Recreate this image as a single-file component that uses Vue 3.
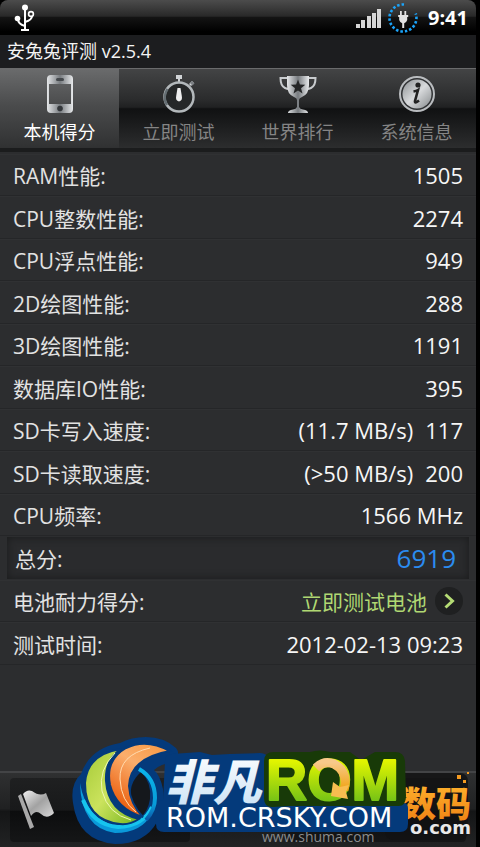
<template>
  <div class="screen">
    <!-- STATUS BAR -->
    <header class="status-bar">
      <svg class="usb" viewBox="0 0 22 28" aria-hidden="true">
        <g fill="none" stroke="#fff" stroke-width="2">
          <path d="M11 4V26M7 26h8M4 15q0 5 7 7M11 18q7-2 7-6" />
          <circle cx="17" cy="10" r="2.4" stroke-width="1.6" />
        </g>
        <circle cx="11" cy="3.5" r="3" fill="#fff" />
        <circle cx="3.5" cy="14.5" r="2.8" fill="#fff" />
      </svg>
      <div class="status-right">
        <svg class="signal" viewBox="0 0 26 20" aria-hidden="true">
          <path
            fill="#d6d6d6"
            d="M0 16h4v4H0zM5 12h4v8H5zM11 8h4v12h-4zM16 5h4v15h-4zM21 1h4v19h-4z"
          />
        </svg>
        <svg class="charge" viewBox="0 0 30 30" aria-hidden="true">
          <path
            d="M16 1.500A13.500 13.500 0 1 0 27.700 10.500"
            fill="none"
            stroke="#1ba4fa"
            stroke-width="2.600"
            stroke-dasharray="2.500 2"
          />
          <path
            fill="#e2e2e2"
            d="M12 8h1.800v4h2.600V8h1.800v4h2v2h-1v3q-1 3-3 3.200V25h-2v-4.800q-2-.2-3-3.200v-3h-1v-2h1.800z"
          />
        </svg>
        <span class="clock">9:41</span>
      </div>
    </header>

    <h1 class="app-title">安兔兔评测 v2.5.4</h1>

    <!-- TABS -->
    <nav class="tabs">
      <button
        v-for="tab in tabs"
        :key="tab.id"
        type="button"
        class="tab"
        :class="{ active: tab.id === activeTab }"
        @click="activeTab = tab.id"
      >
        <svg class="tab-icon" viewBox="0 0 40 40" aria-hidden="true">
          <defs>
            <linearGradient :id="'metal-' + tab.id" x1="0" y1="0" x2="1" y2="0">
              <stop offset="0" stop-color="#e4e6e8" />
              <stop offset="0.500" stop-color="#777b7f" />
              <stop offset="1" stop-color="#e8eaec" />
            </linearGradient>
            <linearGradient id="disc" x1="0" y1="0" x2="1" y2="1">
              <stop offset="0" stop-color="#8b8f92" />
              <stop offset="0.500" stop-color="#d8dadc" />
              <stop offset="1" stop-color="#85898c" />
            </linearGradient>
          </defs>
          <template v-if="tab.id === 'score'">
            <path
              :fill="'url(#metal-' + tab.id + ')'"
              fill-rule="evenodd"
              d="M11 1h18q4 0 4 4v30q0 4-4 4H11q-4 0-4-4V5q0-4 4-4zM9 10v20h22V10z"
            />
            <rect x="16" y="4" width="8" height="3" rx="1.500" fill="#44484c" />
            <circle cx="20" cy="34.500" r="2.800" fill="#33363a" />
          </template>
          <template v-else-if="tab.id === 'test'">
            <path d="M17 1h6v4h-2v3h-2V5h-2zM30 10l3-3 2 2-3 3z" fill="#d0d3d6" />
            <path d="M32 8l2.500 2.500" stroke="#7c8084" stroke-width="3" />
            <circle cx="20" cy="23" r="14.500" fill="#252728" stroke="#b3b8bb" stroke-width="2.500" />
            <path d="M8.500 15A14.500 14.500 0 0 0 8 31" fill="none" stroke="#646d72" stroke-width="2.500" />
            <path d="M18.500 14h3l1.300 8q1 4.500-2.800 5.500-3.800-1-2.800-5.500z" fill="#eee" />
          </template>
          <template v-else-if="tab.id === 'rank'">
            <path
              d="M10 4H2.500q0 8 4.500 10 2 1 4 1M30 4h7.500q0 8-4.500 10-2 1-4 1"
              fill="none"
              stroke="#c8cbce"
              stroke-width="2"
            />
            <path
              :fill="'url(#metal-' + tab.id + ')'"
              d="M9 2h22v9q0 9-7 12-3 1-3 3v7q1 2 4 2.500 5 .5 5 3.500H10q0-3 5-3.500 3-.5 4-2.500v-7q0-2-3-3-7-3-7-12z"
            />
            <path
              fill="#252627"
              d="M20 5.500l1.900 5.100 5.400.2-4.300 3.400 1.500 5.200-4.500-3-4.500 3 1.500-5.200-4.300-3.400 5.400-.2z"
            />
          </template>
          <template v-else>
            <circle cx="20" cy="20" r="17" fill="#303234" stroke="#b9bcbf" stroke-width="2" />
            <circle cx="20" cy="20" r="14.500" fill="url(#disc)" />
            <circle cx="21" cy="11" r="2.600" fill="#222" />
            <path
              d="M16.500 17.500q3-.5 4.500-1.500l-3 11q-.5 3 4-.5"
              fill="none"
              stroke="#222"
              stroke-width="2.600"
            />
          </template>
        </svg>
        <span>{{ tab.label }}</span>
      </button>
    </nav>

    <!-- RESULTS -->
    <main class="results">
      <dl class="rows">
        <div v-for="row in rows" :key="row.label" class="row">
          <dt>{{ row.label }}:</dt>
          <dd>
            <span v-if="row.speed">({{ row.speed }})</span>
            <span>{{ row.value }}</span>
          </dd>
        </div>
      </dl>
      <dl class="total">
        <dt>总分:</dt>
        <dd>6919</dd>
      </dl>
      <dl class="rows">
        <div class="row">
          <dt>电池耐力得分:</dt>
          <dd>
            <button type="button" class="battery">
              立即测试电池
              <svg viewBox="0 0 28 28" aria-hidden="true">
                <circle cx="14" cy="14" r="14" fill="#1f2021" />
                <path d="M10.500 7.500l7 6.500-7 6.500" fill="none" stroke="#b5dc75" stroke-width="3" />
              </svg>
            </button>
          </dd>
        </div>
        <div class="row">
          <dt>测试时间:</dt>
          <dd>2012-02-13 09:23</dd>
        </div>
      </dl>
    </main>

    <!-- BOTTOM BAR -->
    <footer class="bottom-bar">
      <button type="button" class="bar-button" aria-label="提交">
        <svg class="flag" viewBox="0 0 38 40" aria-hidden="true">
          <defs>
            <linearGradient id="flag-metal" x1="0" y1="0" x2="1" y2="1">
              <stop offset="0" stop-color="#f2f2f2" />
              <stop offset="0.500" stop-color="#a2a2a2" />
              <stop offset="1" stop-color="#d8d8d8" />
            </linearGradient>
          </defs>
          <path d="M1 6l3-2 13 33-4 2z" fill="#a9a9a9" />
          <path
            d="M6 4q4-5 9-3 8 6 14 2l8 20q-7 7-13 1-5-5-10 2z"
            fill="url(#flag-metal)"
          />
        </svg>
      </button>
      <button type="button" class="bar-button" aria-label="分享"></button>
    </footer>

    <!-- Watermarks lie over the bottom bar -->
    <svg class="watermark" viewBox="0 0 480 117">
      <defs>
        <linearGradient id="wm-lime" x1="0" y1="0" x2="1" y2="1">
          <stop offset="0" stop-color="#a4c936" />
          <stop offset="0.500" stop-color="#cbe35d" />
          <stop offset="1" stop-color="#75b51d" />
        </linearGradient>
        <linearGradient id="wm-orange" x1="1" y1="0" x2="0.400" y2="1">
          <stop offset="0" stop-color="#f7963e" />
          <stop offset="0.450" stop-color="#fbae6c" />
          <stop offset="1" stop-color="#ea5c0c" />
        </linearGradient>
        <linearGradient id="wm-blue" x1="0" y1="0" x2="0" y2="1">
          <stop offset="0" stop-color="#0bb5ea" />
          <stop offset="0.700" stop-color="#079bd9" />
          <stop offset="1" stop-color="#0c55a5" />
        </linearGradient>
        <linearGradient id="wm-white" x1="0" y1="0" x2="0" y2="1">
          <stop offset="0" stop-color="#fff" />
          <stop offset="1" stop-color="#c6e0f5" />
        </linearGradient>
        <linearGradient id="wm-green" x1="0" y1="0" x2="0" y2="1">
          <stop offset="0.200" stop-color="#e2f500" />
          <stop offset="1" stop-color="#58b51c" />
        </linearGradient>
        <linearGradient id="wm-amber" x1="0" y1="0" x2="0" y2="1">
          <stop offset="0" stop-color="#f8c98a" />
          <stop offset="1" stop-color="#f0a312" />
        </linearGradient>
        <linearGradient id="wm-gold" x1="0" y1="0" x2="0" y2="1">
          <stop offset="0" stop-color="#ffb52e" />
          <stop offset="1" stop-color="#ee7d12" />
        </linearGradient>
      </defs>

      <rect x="385" y="43" width="83" height="67" rx="8" fill="#111213" opacity="0.800" />
      <text class="wm-site" x="262" y="112">www.shuma.com</text>
      <text class="wm-digital" x="401" y="87">数码</text>
      <text class="wm-com" x="410" y="104">o.com</text>
      <path d="M457 45h4v4h-4zM463 50h3v3h-3zM467 42h2v2h-2z" fill="#f49a20" />

      <!-- Backing shapes -->
      <path
        fill="#043a7b"
        d="M176 18Q164 7 146 7q-15 0-26 6Q90 18 81 44q-11 10-8 29 5 38 42 41 30 0 42-22 9-15 6-33-3-14-9-19 6-6 20-8 7-8 2-14z"
      />
      <path
        fill="#043a7b"
        d="M172 24q-7 0-7 7l-2 39q-7 1-7 8v16q0 8 8 8h236q8 0 8-8V78q0-5-5-5H265l3-44q-1-6-8-6l-30 1-18 1-12-3z"
      />
      <path
        fill="#183a08"
        d="M274 22h36q10-3 20 0h20l11 8 14-8h20q9 0 10 9l1 35q0 11-9 10H290l-18 1q-8 0-8-9V31q0-9 10-9z"
      />

      <!-- Globe emblem -->
      <path d="M141 42q11 11 9 27-2 12-9 18l-9-14q-5-19 9-31z" fill="#15181c" />
      <path d="M80 53q6 36 38 44 22 1 34-14-10 20-37 20-34-5-35-50z" fill="#0a9ada" />
      <path
        d="M83 70q10 25 35 27 26-1 34-20"
        fill="none"
        stroke="#16c4ee"
        stroke-width="4"
      />
      <path
        d="M139 39q16 9 16 29 0 12-9 22"
        fill="none"
        stroke="url(#wm-blue)"
        stroke-width="4"
      />
      <path
        fill="url(#wm-lime)"
        stroke="#043a7b"
        stroke-width="2"
        d="M121 19q-34 5-36 34 0 37 35 41 10 1 19-5-31-7-33-38-1-22 15-32z"
      />
      <path d="M115 23q-17 17-13 38 6 23 29 29" fill="none" stroke="#eff7b4" stroke-width="1" />
      <path
        fill="url(#wm-orange)"
        stroke="#043a7b"
        stroke-width="2"
        d="M170 21q-24-13-44-3-21 12-16 37 6 24 33 32-13-13-14-31 1-28 41-35z"
      />
      <path d="M150 18q-31 7-30 31 1 22 16 33" fill="none" stroke="#ffdbaf" stroke-width="1" />

      <!-- Brand -->
      <text class="wm-brand" x="165" y="70">非凡</text>
      <text class="wm-rom" x="266" y="70">ROM</text>
      <path
        fill="none"
        stroke="url(#wm-amber)"
        stroke-width="9"
        d="M316 38q8-8 18-4 15 8 10 26"
      />
      <path d="M333 52l-2 14 17 3-2-7 3-7-9 2z" fill="#f8bd50" />
      <text class="wm-url" x="166" y="97">ROM.CRSKY.COM</text>
    </svg>
  </div>
</template>

<script setup>
import { ref } from 'vue';

const activeTab = ref('score');

const tabs = [
  { id: 'score', label: '本机得分' },
  { id: 'test', label: '立即测试' },
  { id: 'rank', label: '世界排行' },
  { id: 'info', label: '系统信息' },
];

const rows = [
  { label: 'RAM性能', value: '1505' },
  { label: 'CPU整数性能', value: '2274' },
  { label: 'CPU浮点性能', value: '949' },
  { label: '2D绘图性能', value: '288' },
  { label: '3D绘图性能', value: '1191' },
  { label: '数据库IO性能', value: '395' },
  { label: 'SD卡写入速度', speed: '11.7 MB/s', value: '117' },
  { label: 'SD卡读取速度', speed: '>50 MB/s', value: '200' },
  { label: 'CPU频率', value: '1566 MHz' },
];
</script>

<style>
body {
  margin: 0;
  background: #000;
}
</style>

<style scoped>
.screen {
  position: relative;
  display: flex;
  flex-direction: column;
  box-sizing: border-box;
  min-height: 100vh;
  padding-right: 4px;
  background: #000;
  color: #e2e2e2;
  font-family: 'Open Sans', 'Noto Sans CJK SC', sans-serif;
}

button {
  margin: 0;
  padding: 0;
  border: none;
  background: none;
  color: inherit;
  font: inherit;
  cursor: pointer;
}

/* Status bar */
.status-bar {
  display: flex;
  justify-content: space-between;
  align-items: center;
  height: 35px;
  padding: 0 8px 0 14px;
  border-radius: 8px 8px 0 0;
  background: linear-gradient(#4c4c4c, #292929 46%, #141414 50%, #000 90%);
}

.usb {
  width: 22px;
  height: 28px;
}

.status-right {
  display: flex;
  align-items: center;
  gap: 6px;
}

.signal {
  width: 26px;
  height: 20px;
}

.charge {
  width: 30px;
  height: 30px;
}

.clock {
  margin-left: 4px;
  color: #fff;
  font-size: 20px;
  font-weight: 700;
}

.app-title {
  margin: 0;
  padding: 0 7px;
  background: #1c1d1f;
  color: #f4f4f4;
  font-size: 18px;
  font-weight: 400;
  line-height: 33px;
}

/* Tabs */
.tabs {
  display: grid;
  grid-template-columns: repeat(4, 1fr);
  border-bottom: 4px solid #1b1c1d;
  background: linear-gradient(#444546, #2a2b2c 40%, #202122 49%, #101112 51%, #2c2d2e);
}

.tab {
  display: flex;
  flex-direction: column;
  align-items: center;
  gap: 4px;
  height: 80px;
  padding-top: 5px;
  box-sizing: border-box;
  border-top: 1px solid #6a6b6c;
  color: #858585;
  font-size: 18px;
  line-height: 28px;
}

.tab.active {
  background: linear-gradient(#6a6b6c, #4b4c4d 45%, #303132);
  color: #fff;
}

.tab-icon {
  width: 40px;
  height: 40px;
}

/* Results */
.results {
  flex: 1;
  padding-top: 2px;
  background: #2c2d2f;
}

.rows,
.total,
dd {
  margin: 0;
}

.row {
  display: flex;
  justify-content: space-between;
  align-items: center;
  height: 42px;
  padding: 0 13px;
  box-sizing: border-box;
  border-top: 1px solid #303133;
  border-bottom: 1px solid #252628;
}

.row:nth-child(even) {
  height: 43px;
}

dt {
  font-size: 21px;
}

dd {
  display: flex;
  gap: 12px;
  color: #f6f6f6;
  font-size: 22px;
}

.total {
  display: flex;
  justify-content: space-between;
  align-items: center;
  height: 42px;
  margin: 1px 7px;
  padding: 0 13px 0 8px;
  background: #2a2b2d;
  box-shadow: inset 0 0 8px #1a1b1c;
}

.total dd {
  color: #2b8cf0;
  font-size: 26px;
}

.battery {
  display: flex;
  align-items: center;
  gap: 8px;
  color: #b0d873;
  font-size: 21px;
}

.battery svg {
  width: 28px;
  height: 28px;
}

/* Bottom bar */
.bottom-bar {
  display: flex;
  justify-content: space-between;
  height: 76px;
  padding: 5px 10px;
  box-sizing: border-box;
  border-top: 2px solid #434446;
  background: linear-gradient(#2f3031, #202122 48%, #141516 52%, #222324);
}

.bar-button {
  display: flex;
  align-items: center;
  width: 180px;
  padding-left: 7px;
  border-radius: 4px;
  background: linear-gradient(#1f2021, #18191a 50%, #0c0d0e 52%, #151617);
}

.flag {
  width: 38px;
  height: 40px;
}

/* Watermark overlay */
.watermark {
  position: absolute;
  left: 0;
  bottom: 0;
  width: 100%;
  pointer-events: none;
}

.wm-brand {
  fill: url(#wm-white);
  font-size: 48px;
  font-style: italic;
  font-weight: 900;
}

.wm-rom {
  fill: url(#wm-green);
  stroke: url(#wm-green);
  stroke-linejoin: round;
  stroke-width: 2px;
  font-family: 'Liberation Sans', sans-serif;
  font-size: 57px;
  font-weight: 700;
}

.wm-url {
  fill: #fff;
  font-family: 'DejaVu Sans', sans-serif;
  font-size: 27px;
}

.wm-site {
  fill: #8a8c8e;
  font-size: 14px;
}

.wm-digital {
  fill: url(#wm-gold);
  font-size: 35px;
  font-weight: 900;
}

.wm-com {
  fill: #e8e8e8;
  font-family: 'DejaVu Sans', sans-serif;
  font-size: 18px;
  font-weight: 700;
}
</style>
